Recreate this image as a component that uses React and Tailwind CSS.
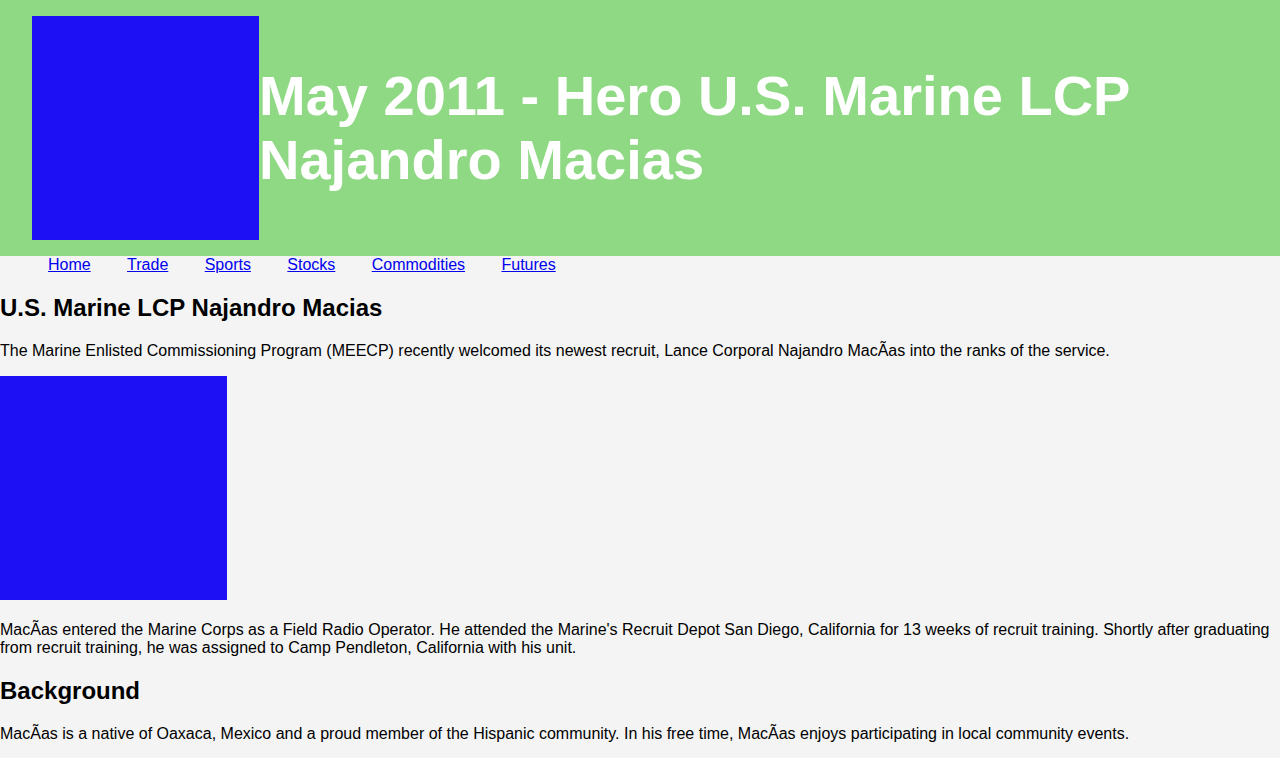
export default function App() {
    const links = ["Home", "Trade", "Sports", "Stocks", "Commodities", "Futures"];

    return (
        <div className="min-h-[758px] bg-[#f4f4f4] text-black font-['Liberation_Sans',Arial,sans-serif] text-base">
            <header className="flex items-center bg-[#8fd984] px-8 py-4">
                <div className="w-[227px] h-[224px] shrink-0 bg-[#1e10f5]"></div>
                <h1 className="m-0 text-[56px] font-bold leading-[1.149] text-white">
                    May 2011 - Hero U.S. Marine LCP Najandro Macias
                </h1>
            </header>
            <nav>
                <ul className="flex gap-[36.4px] pl-12 m-0 list-none leading-[1.149]">
                    {links.map((l) => (
                        <li key={l}>
                            <a href="#" className="text-[#0000ee] underline">{l}</a>
                        </li>
                    ))}
                </ul>
            </nav>
            <main className="leading-[1.149]">
                <h2 className="mt-[19.92px] mb-[19.92px] text-2xl font-bold leading-[1.149]">U.S. Marine LCP Najandro Macias</h2>
                <p className="my-4">
                    The Marine Enlisted Commissioning Program (MEECP) recently welcomed its newest recruit, Lance Corporal Najandro MacÃas into the ranks of the service.
                </p>
                <p className="mt-4 mb-[15px]">
                    <span className="inline-block align-baseline w-[227px] h-[224px] bg-[#1e10f5]"></span>
                </p>
                <p className="my-4">
                    MacÃas entered the Marine Corps as a Field Radio Operator. He attended the Marine's Recruit Depot San Diego, California for 13 weeks of recruit training. Shortly after graduating from recruit training, he was assigned to Camp Pendleton, California with his unit.
                </p>
                <h2 className="mt-[19.92px] mb-[19.92px] text-2xl font-bold leading-[1.149]">Background</h2>
                <p className="my-4">
                    MacÃas is a native of Oaxaca, Mexico and a proud member of the Hispanic community. In his free time, MacÃas enjoys participating in local community events.
                </p>
            </main>
        </div>
    );
}
